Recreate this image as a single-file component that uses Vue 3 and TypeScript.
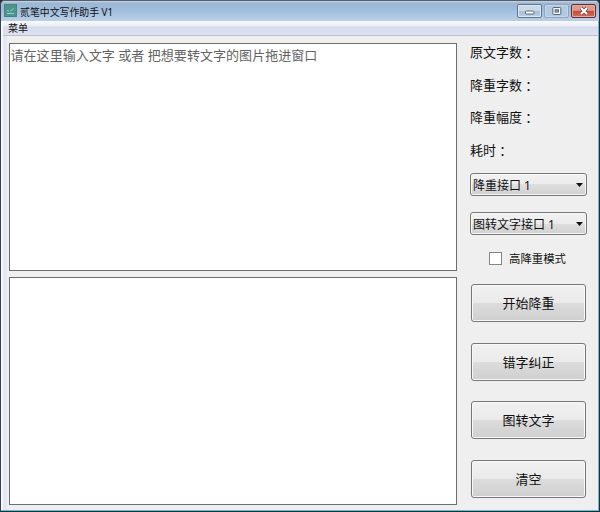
<script setup lang="ts">
import { ref } from 'vue'

const stats: string[] = ['原文字数', '降重字数', '降重幅度', '耗时']
const selects: string[] = ['降重接口 1', '图转文字接口 1']
const actions: string[] = ['开始降重', '错字纠正', '图转文字', '清空']
const source = ref('')
const result = ref('')
const strong = ref(false)
</script>

<template>
  <div class="window">
    <header class="titlebar">
      <svg class="app-icon" width="13" height="13" viewBox="0 0 13 13">
        <rect width="13" height="13" fill="#43857f" />
        <rect x="1" y="1" width="11" height="11" fill="#4d958c" />
        <path d="M3 6.5l2 .8M6 7.3l3.5-2.8M3 9.5h7" fill="none" stroke="#a5cfc3" stroke-width="1" />
      </svg>
      <h1 class="title">贰笔中文写作助手 V1</h1>
      <div class="controls">
        <button class="control" aria-label="最小化">
          <svg width="10" height="12" viewBox="0 0 10 12">
            <rect x="0.5" y="6" width="8.5" height="3" rx="1" fill="#fff" stroke="#5c6b7d" />
          </svg>
        </button>
        <button class="control maximize" aria-label="最大化">
          <svg width="10" height="12" viewBox="0 0 10 12">
            <rect x="0.8" y="2.5" width="8" height="7" rx="1" fill="#f4f7fa" stroke="#56667a" />
            <rect x="3" y="4.7" width="3.6" height="2.4" fill="#8ba2bb" stroke="#4f5f72" stroke-width="0.8" />
          </svg>
        </button>
        <button class="control close" aria-label="关闭">
          <svg width="10" height="12" viewBox="0 0 10 12">
            <path d="M2 3l6 6M8 3l-6 6" stroke="#69434a" stroke-width="3.8" />
            <path d="M2 3l6 6M8 3l-6 6" stroke="#fff" stroke-width="2.2" />
          </svg>
        </button>
      </div>
    </header>
    <nav class="menubar"><span>菜单</span></nav>
    <main class="content">
      <section class="editors">
        <textarea v-model="source" class="editor" placeholder="请在这里输入文字 或者 把想要转文字的图片拖进窗口"></textarea>
        <textarea v-model="result" class="editor"></textarea>
      </section>
      <aside class="panel">
        <div class="stats">
          <p v-for="s in stats" :key="s" class="stat">{{ s }}<span class="colon">：</span></p>
        </div>
        <div class="selects">
          <button v-for="s in selects" :key="s" class="select">
            <span class="select-label">{{ s }}</span>
            <svg width="7" height="4" viewBox="0 0 7 4"><path d="M0 0h7L3.5 4z" fill="#111" /></svg>
          </button>
        </div>
        <label class="check"><input v-model="strong" type="checkbox" />高降重模式</label>
        <div class="actions">
          <button v-for="a in actions" :key="a" class="action">{{ a }}</button>
        </div>
      </aside>
    </main>
  </div>
</template>

<style>
body {
  margin: 0;
  background: #22303a;
}
</style>

<style scoped>
.window {
  box-sizing: border-box;
  width: 600px;
  height: 512px;
  display: flex;
  flex-direction: column;
  overflow: hidden;
  border: 1px solid #18303c;
  border-top-color: #5a5d68;
  border-left-color: #3c4150;
  border-radius: 5px 5px 0 0;
  background: #efefef;
  box-shadow: inset -1px -1px #62bfd2, inset 2px 0 #f6f8fc, inset 6px 0 #e4e7f3;
  color: #111;
  font-family: "Noto Sans", "Noto Sans CJK SC", sans-serif;
}
button {
  font-family: inherit;
  color: inherit;
  margin: 0;
}
.titlebar {
  flex: none;
  box-sizing: border-box;
  height: 20px;
  display: flex;
  align-items: flex-start;
  padding: 3px 3px 0 3px;
  border-radius: 4px 4px 0 0;
  background: linear-gradient(#c7d7e8 0, #9cb6d3 2px, #a0bddc 9px, #b8cde7 19px);
}
.app-icon {
  flex: none;
}
.title {
  margin: 0 0 0 3px;
  font-size: 9.9px;
  font-weight: 400;
  line-height: 16px;
  white-space: nowrap;
}
.controls {
  margin-left: auto;
  display: flex;
  gap: 2px;
}
.control {
  box-sizing: border-box;
  width: 25px;
  height: 14px;
  padding: 0;
  display: flex;
  align-items: center;
  justify-content: center;
  border: 1px solid #61758f;
  border-radius: 2px;
  background: linear-gradient(#c9d9ea 50%, #a5bcd5 50%, #bdd1e7);
  box-shadow: inset 0 0 0 1px #dce8f4;
}
.maximize {
  border-color: #8fa5c0;
  background: #b3c9e2;
  box-shadow: inset 0 0 0 1px #c5d6e9;
}
.close {
  border-color: #632f36;
  background: linear-gradient(#dc9a8c 45%, #c14a36 50%, #d36e58);
  box-shadow: inset 0 0 0 1px #e5a899;
}
.menubar {
  flex: none;
  box-sizing: border-box;
  height: 15px;
  margin: 0 1px 0 2px;
  padding-left: 5px;
  border-bottom: 1px solid #c0c0cb;
  background: linear-gradient(#fafbfd 0, #e8ecf5 5px, #d6dcec 6px, #dde2f1 14px);
  font-size: 10px;
  line-height: 15px;
}
.content {
  flex: 1;
  min-height: 0;
  display: flex;
  gap: 13px;
  padding: 7px 0 0 8px;
}
.editors {
  display: flex;
  flex-direction: column;
  gap: 6px;
}
.editor {
  box-sizing: border-box;
  display: block;
  width: 448px;
  height: 228px;
  margin: 0;
  padding: 1px 0 0 0.5px;
  resize: none;
  outline: none;
  border: 1px solid #6e6e6e;
  border-radius: 0;
  background: #fff;
  font: 13.05px/20px "Noto Sans", "Noto Sans CJK SC", sans-serif;
}
.editor::placeholder {
  color: #636363;
  opacity: 1;
}
.panel {
  width: 117px;
}
.stats {
  box-sizing: border-box;
  height: 130px;
}
.stat {
  height: 18px;
  margin: 0 0 14.6px;
  font-size: 13px;
  line-height: 18px;
}
.colon {
  display: inline-block;
  line-height: 16px;
  vertical-align: -1px;
  font-family: "Noto Sans CJK TC", sans-serif;
}
.selects {
  display: flex;
  flex-direction: column;
  gap: 16px;
}
.select {
  box-sizing: border-box;
  height: 23px;
  padding: 0 3px 0 2px;
  display: flex;
  align-items: center;
  justify-content: space-between;
  border: 1px solid #777;
  border-radius: 3px;
  background: linear-gradient(#f2f2f2, #ebebeb 50%, #dfdfdf 50%, #d0d0d0);
  box-shadow: inset 0 0 0 1px #f7f7f7;
  font-size: 12px;
  line-height: 18px;
}
.select-label {
  padding-top: 2px;
}
.check {
  display: flex;
  align-items: center;
  height: 18px;
  margin: 14px 0 17px 19px;
  gap: 7px;
  font-size: 11.4px;
}
.check input {
  appearance: none;
  box-sizing: border-box;
  width: 13px;
  height: 13px;
  margin: 0;
  border: 1px solid #858585;
  background: #fff;
}
.actions {
  display: flex;
  flex-direction: column;
  gap: 20.5px;
  padding: 0 1px;
}
.action {
  box-sizing: border-box;
  height: 38px;
  padding: 0;
  border: 1px solid #777;
  border-radius: 3px;
  background: linear-gradient(#f1f1f1 0, #eaeaea 50%, #dcdcdc 50%, #cfcfcf);
  box-shadow: inset 0 0 0 1px #f8f8f8;
  font-size: 13px;
  line-height: 20px;
}
</style>
